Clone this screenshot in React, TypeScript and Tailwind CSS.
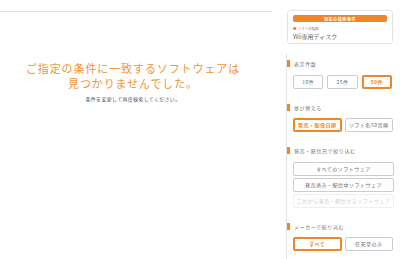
import React from 'react'

const jp = { fontFamily: '"Noto Sans CJK JP", "Noto Sans", sans-serif' }

function Heading({ label }: { label: string }) {
  return (
    <div className="flex h-[7px] items-center border-l-[3px] border-[#ef8627] pl-[4px]">
      <span className="text-[5px] leading-none tracking-[0.6px] text-[#777]">{label}</span>
    </div>
  )
}

function Btn({ label, active, disabled }: { label: string; active?: boolean; disabled?: boolean }) {
  return (
    <div
      className={
        active
          ? 'flex h-[14px] items-center justify-center rounded-[2px] border-2 border-[#ef8627] text-[5px] font-bold tracking-[0.5px] text-[#ef8627]'
          : disabled
          ? 'flex h-[14px] items-center justify-center rounded-[2px] border border-[#eee] text-[5px] tracking-[0.5px] text-[#ccc]'
          : 'flex h-[14px] items-center justify-center rounded-[2px] border border-[#ccc] text-[5px] tracking-[0.5px] text-[#666]'
      }
    >
      {label}
    </div>
  )
}

export default function App() {
  return (
    <div className="flex h-[259px] w-[400px] overflow-hidden bg-white" style={jp}>
      {/* main */}
      <div className="w-[272px] pt-[11px]">
        <div className="border-t border-[#ddd] pr-[6px] pt-[49px] text-center">
          <p className="text-[11px] leading-[15px] tracking-[0.9px] text-[#f29436]">
            ご指定の条件に一致するソフトウェアは
            <br />
            見つかりませんでした。
          </p>
          <p className="mt-[4px] text-[5px] leading-[8px] tracking-[0.3px] text-[#555]">
            条件を変更して再度検索してください。
          </p>
        </div>
      </div>

      {/* sidebar */}
      <div className="ml-[14px] w-[108px]">
        <div className="ml-px mt-[10px] h-[34px] w-[106px] rounded-[3px] border border-[#e3e3e3] px-[5px] pt-[4px]">
          <div className="flex h-[7px] items-center justify-center rounded-[2px] bg-[#ef8627] text-[4px] font-bold tracking-[0.6px] text-white">
            現在の検索条件
          </div>
          <div className="mt-[5px] flex items-center text-[3.5px] leading-none text-[#777]">
            <span className="mr-[1px] text-[#ef8627]">●</span>ソフトの種類
          </div>
          <div className="mt-[3px] text-[6px] leading-none text-[#666]">Wii専用ディスク</div>
        </div>

        <div className="mt-[9px] h-[220px] border-l border-[#e3e3e3] pt-[7px]">
          <Heading label="表示件数" />
          <div className="ml-[6px] mt-[8px] grid w-[99px] grid-cols-3 gap-[4px]">
            <Btn label="10件" />
            <Btn label="25件" />
            <Btn label="50件" active />
          </div>

          <div className="mt-[15px]">
            <Heading label="並び替える" />
          </div>
          <div className="ml-[6px] mt-[7px] grid w-[100px] grid-cols-2 gap-[3px]">
            <Btn label="発売・配信日順" active />
            <Btn label="ソフト名50音順" />
          </div>

          <div className="mt-[15px]">
            <Heading label="発売・配信日で絞り込む" />
          </div>
          <div className="ml-[6px] mt-[8px] flex w-[101px] flex-col gap-[2px]">
            <Btn label="すべてのソフトウェア" />
            <Btn label="発売済み・配信中ソフトウェア" />
            <Btn label="これから発売・配信するソフトウェア" disabled />
          </div>

          <div className="mt-[15px]">
            <Heading label="メーカーで絞り込む" />
          </div>
          <div className="ml-[6px] mt-[7px] grid w-[100px] grid-cols-2 gap-[3px]">
            <Btn label="すべて" active />
            <Btn label="任天堂のみ" />
          </div>
        </div>
      </div>
    </div>
  )
}
